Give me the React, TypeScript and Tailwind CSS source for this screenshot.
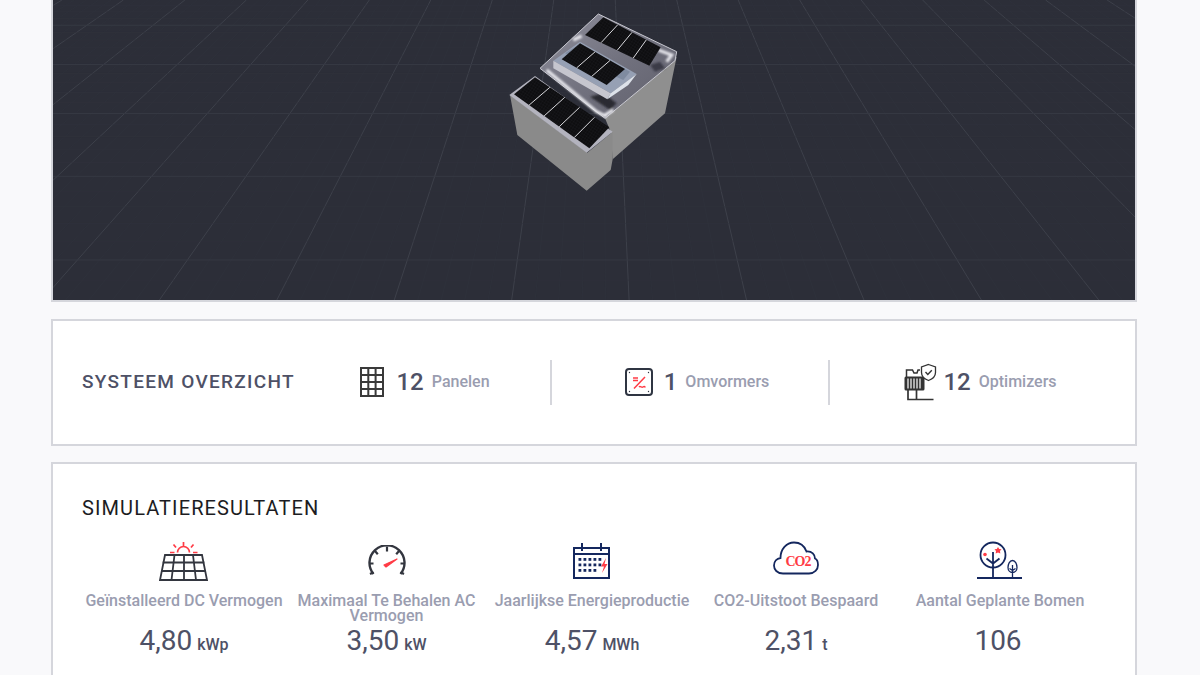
import React from "react";

const NAVY = "#14275e";
const RED = "#ff3b45";
const DARK = "#33363f";

const VP_X = 600;
const VP_Y = -330;
const BOTTOM = 298;

// grid of the 3d viewer, lines run to one vanishing point
const GroundGrid = () => {
  const verticals: React.ReactNode[] = [];
  for (let i = -80; i <= 80; i++) {
    const x298 = 629 + (i * 117) / 5;
    const major = i % 5 === 0;
    const t = (0 - VP_Y) / (BOTTOM - VP_Y);
    verticals.push(
      <line
        key={`v${i}`}
        x1={VP_X + (x298 - VP_X) * t}
        y1={0}
        x2={VP_X + (x298 - VP_X) * 1.01}
        y2={304}
        stroke={major ? "#3d404a" : "#2f323c"}
        strokeWidth={major ? 1 : 0.6}
      />
    );
  }
  const horizontals: React.ReactNode[] = [];
  for (let i = -3; i <= 30; i++) {
    const y = VP_Y + 1 / (0.001695 + (0.00028 * i) / 5);
    if (y < 0 || y > 300) continue;
    const major = i % 5 === 0;
    horizontals.push(
      <line
        key={`h${i}`}
        x1={53}
        x2={1135}
        y1={y}
        y2={y}
        stroke={major ? "#363943" : "#30333d"}
        strokeWidth={major ? 1 : 0.6}
      />
    );
  }
  return (
    <g>
      {verticals}
      {horizontals}
    </g>
  );
};

// a row of solar panels between four corners, split in n parts along a->b
const PanelRow = ({ a, b, c, d, n }: { a: number[]; b: number[]; c: number[]; d: number[]; n: number }) => {
  const dividers = [];
  for (let i = 1; i < n; i++) {
    const t = i / n;
    dividers.push(
      <line
        key={i}
        x1={a[0] + (b[0] - a[0]) * t}
        y1={a[1] + (b[1] - a[1]) * t}
        x2={d[0] + (c[0] - d[0]) * t}
        y2={d[1] + (c[1] - d[1]) * t}
        stroke="#d8d8dc"
        strokeWidth={3}
      />
    );
  }
  return (
    <g>
      <polygon points={`${a} ${b} ${c} ${d}`} fill="url(#cells)" />
      {dividers}
    </g>
  );
};

const Building = () => (
  <svg x={490} y={0} width={210} height={200} viewBox="0 0 630 600">
    <defs>
      <pattern id="cells" width="8" height="8" patternUnits="userSpaceOnUse" patternTransform="rotate(33)">
        <rect width="8" height="8" fill="#0e0e10" />
        <path d="M0 0h8M0 0v8" stroke="#2b2b2f" strokeWidth="1" />
      </pattern>
      <linearGradient id="roof" x1="0" y1="0" x2="1" y2="1">
        <stop offset="0" stopColor="#8f8f9c" />
        <stop offset="0.5" stopColor="#72727f" />
        <stop offset="1" stopColor="#5f5f6b" />
      </linearGradient>
      <filter id="soft">
        <feGaussianBlur stdDeviation="3" />
      </filter>
    </defs>
    {/* walls */}
    <polygon points="345,355 560,170 525,340 368,478 362,395" fill="#8f8f8f" />
    <polygon points="60,285 292,458 368,395 368,478 362,510 290,572 82,405" fill="#8a8a8a" />
    {/* upper roof */}
    <polygon points="325,42 560,155 555,182 345,355 150,205" fill="url(#roof)" stroke="#c8c8d0" strokeWidth="3" />
    <g filter="url(#soft)">
      <path d="M505 150l40 15-15 20" stroke="#e4e4ea" strokeWidth="10" fill="none" />
      <path d="M480 195l30-10 15 20-30 10z" fill="#3b3b46" />
      <path d="M170 210l150 125 30 15" stroke="#e9e9ee" strokeWidth="9" fill="none" />
      <path d="M300 290l60 40 20-20-40-30z" fill="#2a2a32" />
      <path d="M345 345l25-15" stroke="#eeeef3" strokeWidth="9" fill="none" />
      <path d="M250 120l25-12" stroke="#e4e4ea" strokeWidth="10" fill="none" />
    </g>
    {/* raised block */}
    <polygon points="190,182 270,125 440,222 362,280" fill="#96a0b4" />
    <polygon points="190,182 362,280 352,298 190,205" fill="#c6c6ce" />
    <polygon points="362,280 440,222 415,255 352,298" fill="#dde2ea" />
    <polygon points="270,132 420,215 400,240 225,160" fill="#7f8ba0" />
    <PanelRow a={[340, 52]} b={[512, 142]} c={[478, 197]} d={[285, 105]} n={4} />
    <PanelRow a={[270, 130]} b={[405, 207]} c={[350, 255]} d={[215, 178]} n={3} />
    {/* lower roof */}
    <polygon points="58,285 135,228 368,395 290,458" fill="#b3b3be" />
    <PanelRow a={[135, 232]} b={[358, 382]} c={[298, 445]} d={[72, 283]} n={5} />
  </svg>
);

const PanelsIcon = () => (
  <svg width="24" height="30" viewBox="0 0 24 30" fill="none" stroke="#3a3a3a" strokeWidth="2">
    <rect x="1" y="1" width="22" height="28" />
    <path d="M8.300 1v28M15.600 1v28M1 8h22M1 15h22M1 22h22" />
  </svg>
);

const InverterIcon = () => (
  <svg width="28" height="28" viewBox="0 0 28 28" fill="none">
    <rect x="1" y="1" width="26" height="26" rx="3" stroke="#2f3542" strokeWidth="2" />
    <path d="M8 10h5M8 12.500h5M20 9L9 20.500M14 19c1.500-1.500 2.500 1 4 0s1.500 0 2.500 0" stroke={RED} strokeWidth="1.500" />
    <circle cx="4.500" cy="4.500" r=".7" fill="#2f3542" />
    <circle cx="23.500" cy="4.500" r=".7" fill="#2f3542" />
    <circle cx="4.500" cy="23.500" r=".7" fill="#2f3542" />
    <circle cx="23.500" cy="23.500" r=".7" fill="#2f3542" />
  </svg>
);

const OptimizerIcon = () => (
  <svg width="33" height="38" viewBox="0 0 33 38" fill="none" stroke="#333" strokeWidth="1.500">
    <path d="M2.500 14V7h6l1.500 3h3l1-3h2" />
    <rect x="0.500" y="13.500" width="20" height="14" rx="1.500" fill="#333" stroke="none" />
    <path d="M4 15.500v10M7 15.500v10M10 15.500v10M13 15.500v10M16 15.500v10" stroke="#fff" strokeWidth="1.200" />
    <path d="M4 27v9.500h8.500V27M12.500 36.500h17" strokeWidth="1.700" />
    <path d="M24.500 1.500l7 2.500v5.500c0 4-3 6.500-7 8-4-1.500-7-4-7-8V4z" fill="#fff" strokeWidth="1.300" />
    <path d="M21.500 9l2.300 2.400 4-4.200" strokeWidth="1.400" />
  </svg>
);

const SolarIcon = () => (
  <svg width="50" height="40" viewBox="0 0 50 40" fill="none">
    <path d="M6 14h37l5 25H1z" stroke={DARK} strokeWidth="1.800" />
    <path d="M3.700 21.500h41.600M2.200 30h44.600M15.500 14l-3 25M25 14v25M34 14l3 25" stroke={DARK} strokeWidth="1.800" />
    <path d="M18.500 11.500a6 6 0 0 1 12 0M24.500 1v4M14.500 3.500l2.500 3M34.500 3.500l-2.500 3M11 11.500h4.500M34 11.500h4.500" stroke={RED} strokeWidth="1.700" />
  </svg>
);

const GaugeIcon = () => (
  <svg width="40" height="32" viewBox="0 0 40 32" fill="none">
    <path d="M6.500 29A17.500 17.500 0 1 1 33.500 29" stroke={DARK} strokeWidth="2.400" />
    <path d="M20 1.500v5M8 6l2.800 3.200M32 6l-2.800 3.200M2.500 18.500h4M37.500 18.500h-4M3 29l3.500-1.800M37 29l-3.500-1.800" stroke={DARK} strokeWidth="2.200" />
    <path d="M17 20L30 14 19 22z" fill={RED} stroke={RED} strokeWidth="1.200" strokeLinejoin="round" />
  </svg>
);

const CalendarIcon = () => {
  const dots = [];
  for (let row = 0; row < 3; row++) {
    for (let col = 0; col < 5; col++) {
      if (row === 2 && col === 4) continue;
      dots.push(<rect key={`${row}-${col}`} x={5.500 + col * 5} y={15 + row * 5.500} width="2.800" height="2.800" fill={NAVY} />);
    }
  }
  return (
    <svg width="38" height="36" viewBox="0 0 38 36">
      <rect x="1" y="5" width="35" height="30" fill="none" stroke={NAVY} strokeWidth="2" />
      <path d="M1 11h35M9 0v8M28 0v8" fill="none" stroke={NAVY} strokeWidth="2" />
      {dots}
      <path d="M33 15l-5 8.500h3l-2 6.500 5.500-9h-3z" fill={RED} />
    </svg>
  );
};

const CloudIcon = () => (
  <svg className="mb-[7px]" width="46" height="34" viewBox="0 0 46 34">
    <path
      d="M10 32.500C4 32.500 1 28.500 1 24.500c0-4 2.800-7 6.500-7.500C7.500 8 13.500 1.500 21 1.500c6 0 10.500 3.500 12.500 9 5.500-.5 8.500 3 8.500 7 2.300 1 3 4 3 6.500 0 4.500-3.500 8.500-9 8.500z"
      fill="none"
      stroke={NAVY}
      strokeWidth="1.800"
    />
    <text x="12.500" y="25" fill={RED} fontSize="14" fontWeight="700" letterSpacing="-1" fontFamily="'Liberation Serif', serif">
      CO2
    </text>
  </svg>
);

const TreeIcon = () => (
  <svg width="46" height="40" viewBox="0 0 46 40" fill="none" stroke={NAVY}>
    <circle cx="16" cy="14" r="12.500" strokeWidth="1.800" />
    <path d="M16 11v26M9.500 17.500l6.500 5 6.500-5M0 37h45" strokeWidth="1.800" />
    <path d="M35.500 19.500c-3 0-4.500 4-4.500 7s2 5 4.500 5 4.500-2 4.500-5-1.500-7-4.500-7zM35.500 24v13M32.500 27.500l3 2 3-2" strokeWidth="1.300" />
    <circle cx="8" cy="13.500" r="1.800" fill={RED} stroke="none" />
    <path d="M21 6l1.200 2 2.300.300-1.500 1.800.300 2.400-2.300-1-2.300 1 .300-2.400-1.500-1.800 2.300-.300z" fill={RED} stroke="none" />
  </svg>
);

const overview = [
  { icon: <PanelsIcon />, count: "12", label: "Panelen", cls: "pl-[26px] gap-3" },
  { icon: <InverterIcon />, count: "1", label: "Omvormers", cls: "pl-[14px] gap-[11px]" },
  { icon: <OptimizerIcon />, count: "12", label: "Optimizers", cls: "pl-[23px] gap-[6px]" },
];

const results = [
  { icon: <SolarIcon />, label: "Geïnstalleerd DC Vermogen", value: "4,80", unit: "kWp", cls: "" },
  { icon: <GaugeIcon />, label: "Maximaal Te Behalen AC Vermogen", value: "3,50", unit: "kW", cls: "pr-[3px]" },
  { icon: <CalendarIcon />, label: "Jaarlijkse Energieproductie", value: "4,57", unit: "MWh", cls: "" },
  { icon: <CloudIcon />, label: "CO2-Uitstoot Bespaard", value: "2,31", unit: "t", cls: "" },
  { icon: <TreeIcon />, label: "Aantal Geplante Bomen", value: "106", unit: "", cls: "" },
];

export default function App() {
  return (
    <div className="h-[675px] overflow-hidden bg-[#f9f9fb] pl-[51px] pr-[63px] font-['Roboto',sans-serif]">
      <div className="h-[302px] border-x-2 border-b-2 border-[#d5d6dc] bg-[#2c2e38]">
        <svg className="block h-full w-full" viewBox="53 0 1082 300">
          <GroundGrid />
          <Building />
        </svg>
      </div>

      <div className="mt-[17px] flex h-[127px] items-center border-2 border-[#d5d6dc] bg-white pl-[29px]">
        <h2 className="mb-[2px] w-[192px] shrink-0 whitespace-nowrap text-[19px] font-medium leading-7 tracking-[1.300px] text-[#4e5166]">SYSTEEM OVERZICHT</h2>
        {overview.map((item, i) => (
          <div
            key={item.label}
            className={`flex h-[45px] w-[278px] items-center justify-center pb-[2px] ${item.cls} ${i < 2 ? "border-r-2 border-[#d5d6dc]" : ""}`}
          >
            {item.icon}
            <div className="flex items-center gap-2">
              <span className="text-[24px] font-medium leading-none text-[#4e5166]">{item.count}</span>
              <span className="text-[16px] font-medium text-[#9a9db0]">{item.label}</span>
            </div>
          </div>
        ))}
      </div>

      <div className="mt-4 h-[300px] border-2 border-[#d5d6dc] bg-white px-[29px] pt-[32px]">
        <h2 className="text-[20px] leading-6 tracking-[1.100px] text-[#1c1c22]">SIMULATIERESULTATEN</h2>
        <div className="mt-[21px] grid w-[1020px] grid-cols-5">
          {results.map((r) => (
            <div key={r.label} className={`flex flex-col items-center text-center ${r.cls}`}>
              <div className="flex h-10 items-center">{r.icon}</div>
              <p className="mt-3 h-[15px] text-[16px] font-medium leading-[15px] text-[#9a9db0]">{r.label}</p>
              <p className={`mt-[15px] h-9 text-[28px] leading-9 text-[#4e5166] ${r.unit ? "" : "pr-1"}`}>
                {r.value}
                {r.unit && <span className="ml-[5px] text-[16px] font-medium">{r.unit}</span>}
              </p>
            </div>
          ))}
        </div>
      </div>
    </div>
  );
}
